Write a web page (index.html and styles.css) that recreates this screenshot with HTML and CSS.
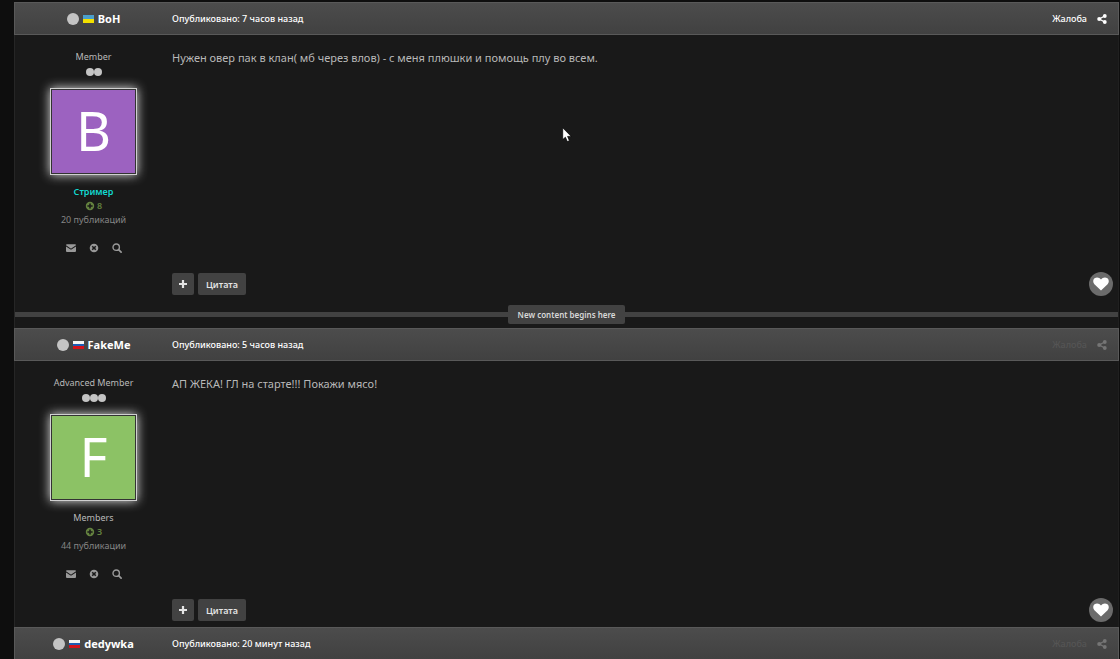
FILE: index.html
```html
<!DOCTYPE html>
<html lang="ru">
<head>
  <meta charset="UTF-8">
  <meta name="viewport" content="width=device-width, initial-scale=1.0">
  <title>Форум</title>
  <link rel="stylesheet" href="styles.css">
</head>
<body>

  <!-- Shared icons -->
  <svg class="sprite" aria-hidden="true">
    <symbol id="share" viewBox="0 0 10 10">
      <path d="M7.6 2 L2.4 5 L7.6 8" fill="none" stroke="currentColor" stroke-width="1.4"/>
      <circle cx="7.8" cy="2" r="1.9"/><circle cx="2.2" cy="5" r="2"/><circle cx="7.8" cy="8" r="1.9"/>
    </symbol>
    <symbol id="mail" viewBox="0 0 10 10">
      <path d="M0 2.2Q0 1.2 1 1.2H9Q10 1.2 10 2.2L5.6 5.3Q5 5.7 4.4 5.3L0 2.2Z"/>
      <path d="M0 3.4L4.2 6.3Q5 6.8 5.8 6.3L10 3.4V8Q10 9 9 9H1Q0 9 0 8Z"/>
    </symbol>
    <symbol id="cross" viewBox="0 0 10 10">
      <path fill-rule="evenodd" d="M5 .7A4.3 4.3 0 1 0 5 9.3A4.3 4.3 0 1 0 5 .7ZM3.8 2.7L5 3.9L6.2 2.7L7.3 3.8L6.1 5L7.3 6.2L6.2 7.3L5 6.1L3.8 7.3L2.7 6.2L3.9 5L2.7 3.8Z"/>
    </symbol>
    <symbol id="search" viewBox="0 0 10 10">
      <circle cx="4.2" cy="4.2" r="3.2" fill="none" stroke="currentColor" stroke-width="1.4"/>
      <path d="M6.6 6.6L9.1 9.1" stroke="currentColor" stroke-width="1.7" stroke-linecap="round"/>
    </symbol>
    <symbol id="rep" viewBox="0 0 10 10">
      <path fill-rule="evenodd" d="M5 .8A4.2 4.2 0 1 0 5 9.2A4.2 4.2 0 1 0 5 .8ZM4.2 2.4H5.8V4.2H7.6V5.8H5.8V7.6H4.2V5.8H2.4V4.2H4.2Z"/>
    </symbol>
    <symbol id="plus" viewBox="0 0 10 10">
      <path d="M3.9 1H6.1V3.9H9V6.1H6.1V9H3.9V6.1H1V3.9H3.9Z"/>
    </symbol>
    <symbol id="heart" viewBox="0 0 16 14">
      <path d="M8 13.6L1.4 7.2C-.4 5.3 0 2.4 1.6 1.2C3.6-.3 6.6.3 8 2.6C9.4.3 12.4-.3 14.4 1.2C16 2.4 16.4 5.3 14.6 7.2Z"/>
    </symbol>
  </svg>

  <main class="topic">

    <article class="post">
      <header class="post-head">
        <h3 class="user"><span class="status"></span><span class="flag ua"></span><a href="#">BoH</a></h3>
        <a class="date" href="#">Опубликовано: 7 часов назад</a>
        <div class="tools">
          <a href="#">Жалоба</a>
          <a href="#" aria-label="Поделиться"><svg class="icon"><use href="#share"/></svg></a>
        </div>
      </header>
      <div class="post-body">
        <aside class="author">
          <div class="rank">Member</div>
          <div class="pips"><i></i><i></i></div>
          <a class="avatar purple" href="#">B</a>
          <div class="group streamer">Стример</div>
          <div class="rep"><svg class="icon"><use href="#rep"/></svg>8</div>
          <div class="count">20 публикаций</div>
          <div class="links">
            <a href="#" aria-label="Сообщение"><svg class="icon"><use href="#mail"/></svg></a>
            <a href="#" aria-label="Игнорировать"><svg class="icon"><use href="#cross"/></svg></a>
            <a href="#" aria-label="Найти"><svg class="icon"><use href="#search"/></svg></a>
          </div>
        </aside>
        <div class="content">
          <p>Нужен овер пак в клан( мб через влов) - с меня плюшки и помощь плу во всем.</p>
          <div class="controls">
            <button class="btn multi" aria-label="Мультицитата"><svg class="icon"><use href="#plus"/></svg></button>
            <button class="btn">Цитата</button>
            <button class="like" aria-label="Нравится"><svg><use href="#heart"/></svg></button>
          </div>
        </div>
      </div>
    </article>

    <div class="divider"><span>New content begins here</span></div>

    <article class="post">
      <header class="post-head">
        <h3 class="user"><span class="status"></span><span class="flag ru"></span><a href="#">FakeMe</a></h3>
        <a class="date" href="#">Опубликовано: 5 часов назад</a>
        <div class="tools dim">
          <a href="#">Жалоба</a>
          <a href="#" aria-label="Поделиться"><svg class="icon"><use href="#share"/></svg></a>
        </div>
      </header>
      <div class="post-body">
        <aside class="author">
          <div class="rank">Advanced Member</div>
          <div class="pips"><i></i><i></i><i></i></div>
          <a class="avatar green" href="#">F</a>
          <div class="group">Members</div>
          <div class="rep"><svg class="icon"><use href="#rep"/></svg>3</div>
          <div class="count">44 публикации</div>
          <div class="links">
            <a href="#" aria-label="Сообщение"><svg class="icon"><use href="#mail"/></svg></a>
            <a href="#" aria-label="Игнорировать"><svg class="icon"><use href="#cross"/></svg></a>
            <a href="#" aria-label="Найти"><svg class="icon"><use href="#search"/></svg></a>
          </div>
        </aside>
        <div class="content">
          <p>АП ЖЕКА! ГЛ на старте!!! Покажи мясо!</p>
          <div class="controls">
            <button class="btn multi" aria-label="Мультицитата"><svg class="icon"><use href="#plus"/></svg></button>
            <button class="btn">Цитата</button>
            <button class="like" aria-label="Нравится"><svg><use href="#heart"/></svg></button>
          </div>
        </div>
      </div>
    </article>

    <article class="post">
      <header class="post-head">
        <h3 class="user"><span class="status"></span><span class="flag ru"></span><a href="#">dedywka</a></h3>
        <a class="date" href="#">Опубликовано: 20 минут назад</a>
        <div class="tools dim">
          <a href="#">Жалоба</a>
          <a href="#" aria-label="Поделиться"><svg class="icon"><use href="#share"/></svg></a>
        </div>
      </header>
    </article>

  </main>

  <!-- Mouse pointer -->
  <svg class="pointer" viewBox="0 0 10 16" aria-hidden="true">
    <path d="M.7 .8V12.6L3.4 10.2L5.3 14.6L7.4 13.7L5.6 9.4H9.2Z" fill="#fff" stroke="#000" stroke-width=".7"/>
  </svg>

</body>
</html>
```

FILE: styles.css
```css
* {
  margin: 0; padding: 0;
  box-sizing: border-box;
}

body {
  font-family: "Noto Sans", "Open Sans", sans-serif;
  font-size: 9px;
  line-height: 14px;
  color: #b8b8b8;
  background: #0e0e0e;
  min-height: 100vh;
  overflow: hidden;
  padding: 2px 1px 0 14px;
}

a {
  color: inherit;
  text-decoration: none;
}

.sprite {
  position: absolute;
  width: 0;
  height: 0;
}

.icon {
  display: block;
  width: 10px;
  height: 10px;
  fill: currentColor;
}

.topic {
  background: #191919;
  border-left: 1px solid #262626;
  border-right: 1px solid #202020;
}

/* Header bar */
.post-head {
  display: grid;
  grid-template-columns: 157px 1fr auto;
  align-items: center;
  height: 33px;
  margin: 0 -1px;
  padding-right: 11px;
  background: linear-gradient(#4c4c4c, #414141);
  border: 1px solid #595959;
  color: #fff;
}

.user {
  display: flex;
  align-items: center;
  justify-content: center;
  gap: 4px;
  font-size: 11px;
}

.status {
  width: 12px;
  height: 12px;
  border-radius: 50%;
  background: #c4c4c4;
}

.flag {
  width: 11px;
  height: 8px;
}

.flag.ua { background: linear-gradient(#4a9fcc 50%, #f3e000 50%); }
.flag.ru { background: linear-gradient(#f4f4f4 33%, #1d5bb4 33% 66%, #d3121b 66%); }

.date, .tools {
  font-weight: 500;
}

.tools {
  display: flex;
  align-items: center;
  gap: 10px;
}

.tools.dim { color: #555; }
.tools.dim .icon { color: #757575; }

/* Post */
.post-body {
  display: grid;
  grid-template-columns: 157px 1fr;
  min-height: 266px;
}

.author {
  display: flex;
  flex-direction: column;
  align-items: center;
  padding-top: 15px;
}

.pips {
  display: flex;
  align-items: center;
  height: 16px;
}

.pips i {
  width: 8px;
  height: 8px;
  border-radius: 50%;
  background: #c4c4c4;
}

.avatar {
  width: 87px;
  height: 87px;
  margin: 8px 0 10px;
  border: 1px solid #d0d0d0;
  outline: 1px solid #333;
  outline-offset: -2px;
  box-shadow: 0 0 10px #e0e0e0;
  color: #fff;
  font-size: 54px;
  line-height: 82px;
  text-align: center;
}

.avatar.purple { background: #9c62c0; }
.avatar.green { background: #8cc265; }

.group.streamer {
  color: #12d8d0;
  font-weight: 600;
}

.rep {
  display: flex;
  align-items: center;
  gap: 2px;
  color: #64823f;
  font-weight: 600;
}

.count { color: #858585; }

.links {
  display: flex;
  gap: 13px;
  margin-top: 16px;
  color: #999;
}

.content {
  display: flex;
  flex-direction: column;
  justify-content: space-between;
  padding: 15px 5px 5px 0;
}

.content p {
  font-size: 11px;
  line-height: 16px;
}

.controls {
  display: flex;
  align-items: center;
  gap: 4px;
}

.btn {
  height: 22px;
  padding: 0 8px;
  border: none;
  border-radius: 2px;
  background: #424242;
  color: #e4e4e4;
  font: 600 9px "Noto Sans", "Open Sans", sans-serif;
}

.btn.multi { padding: 0 6px; }

.like {
  display: flex;
  align-items: center;
  justify-content: center;
  width: 24px;
  height: 24px;
  margin-left: auto;
  border: none;
  border-radius: 50%;
  background: #6b6b6b;
}

.like svg {
  width: 16px;
  height: 14px;
  fill: #fff;
}

/* Unread marker */
.divider {
  display: flex;
  align-items: center;
  margin: 4px 0;
}

.divider::before,
.divider::after {
  content: "";
  flex: 1;
  height: 5px;
  background: #424242;
}

.divider span {
  padding: 0 10px;
  border-radius: 2px;
  background: #424242;
  color: #d8d8d8;
  font-size: 8px;
  font-weight: 600;
  line-height: 19px;
}

.pointer {
  position: absolute;
  left: 562px;
  top: 127px;
  width: 10px;
  height: 16px;
}
```
